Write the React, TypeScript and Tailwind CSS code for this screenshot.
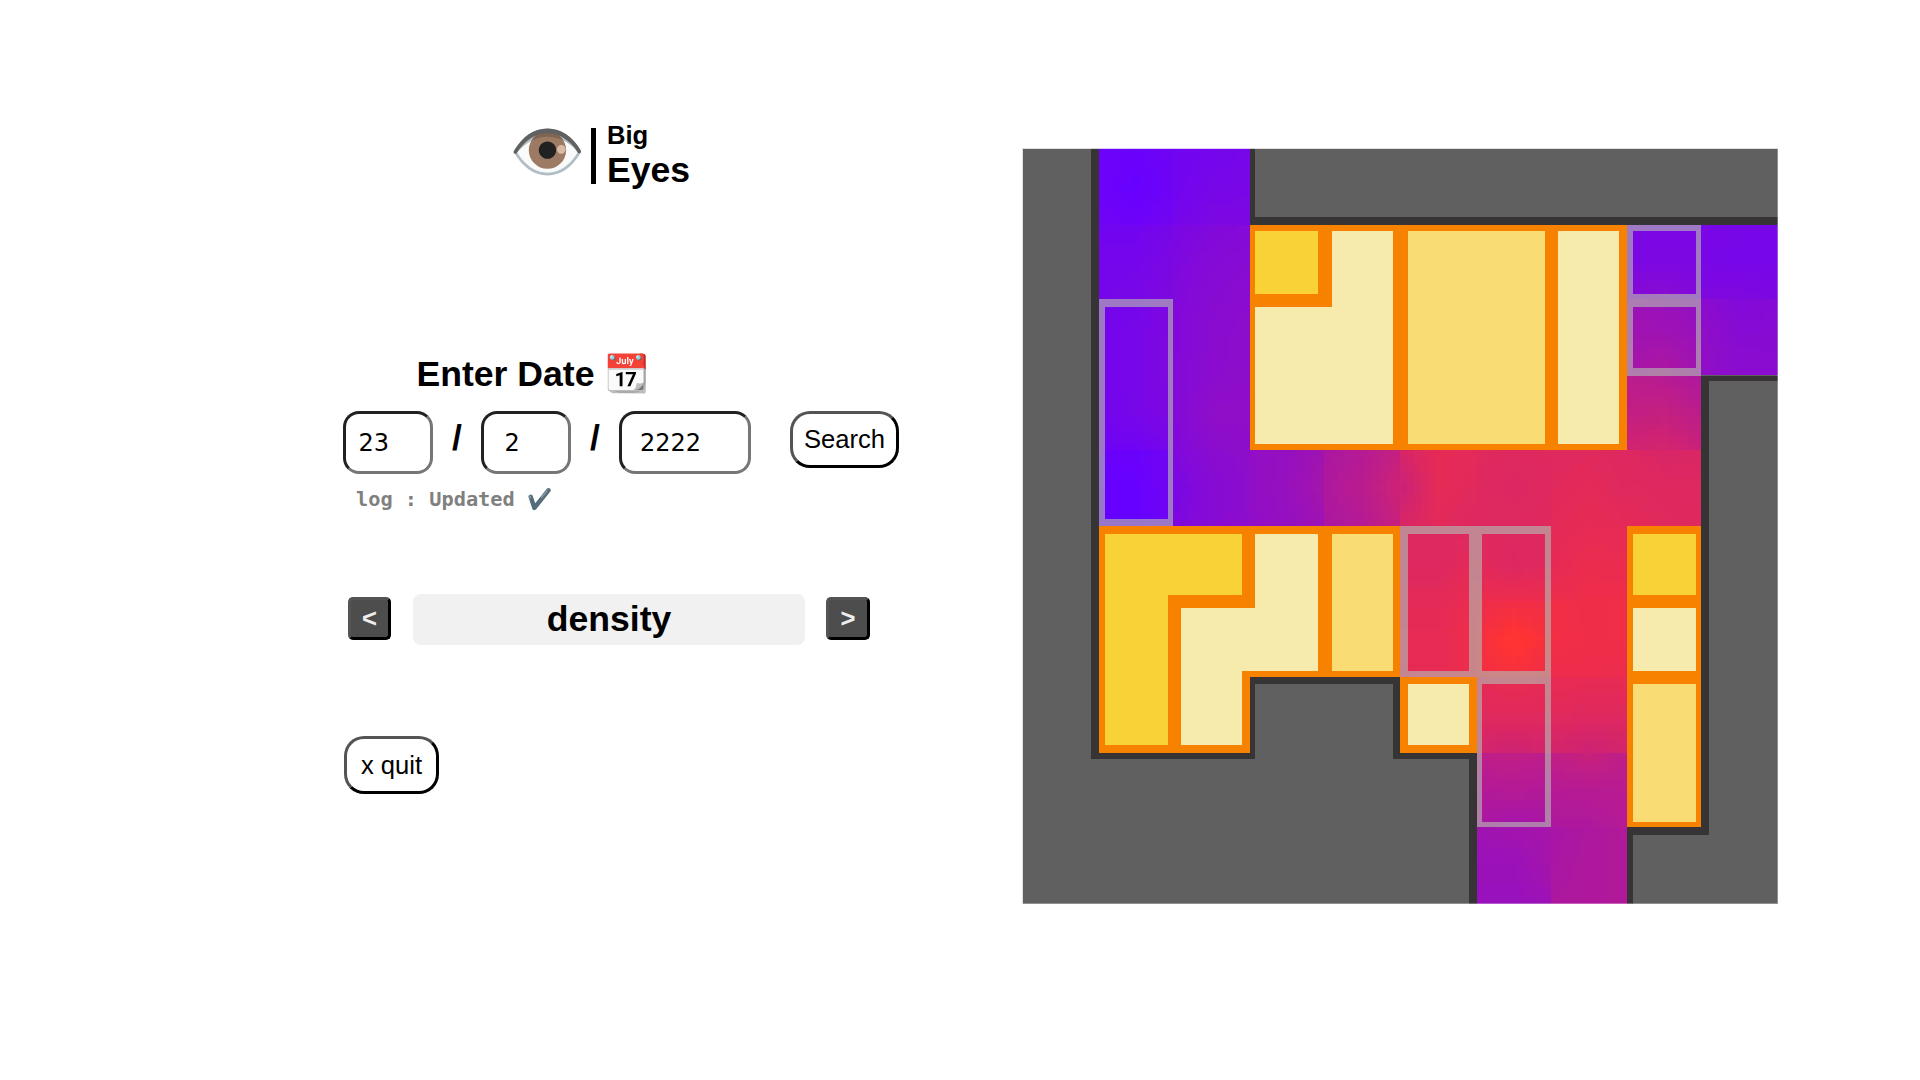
import React from "react";

type Grid = number[][];
type Box = [number, number, number, number];

const COLS = [1022, 1099, 1173, 1250, 1324, 1400, 1477, 1551, 1627, 1701, 1778];
const ROWS = [148, 225, 299, 375, 450, 526, 601, 677, 753, 827, 904];

// Density samples (3x3 per walkable cell), keyed by "column,row".
const DENSITY: Record<string, Grid> = {
  "1,0": [[0.04, 0.02, 0.06], [0.04, 0, 0.05], [0.06, 0.04, 0.08]],
  "1,1": [[0.07, 0.07, 0.11], [0.1, 0.1, 0.14], [0.1, 0.12, 0.16]],
  "1,2": [[0.1, 0.1, 0.14], [0.1, 0.11, 0.16], [0.1, 0.11, 0.16]],
  "1,3": [[0.1, 0.11, 0.16], [0.09, 0.11, 0.15], [0.06, 0.06, 0.11]],
  "1,4": [[0.03, 0.02, 0.08], [0, 0, 0.08], [0, 0, 0.06]],
  "2,0": [[0.07, 0.09, 0.11], [0.07, 0.11, 0.12], [0.1, 0.14, 0.14]],
  "2,1": [[0.12, 0.17, 0.19], [0.15, 0.2, 0.22], [0.17, 0.22, 0.24]],
  "2,2": [[0.17, 0.22, 0.24], [0.18, 0.23, 0.26], [0.18, 0.24, 0.26]],
  "2,3": [[0.18, 0.24, 0.26], [0.18, 0.27, 0.27], [0.17, 0.24, 0.26]],
  "2,4": [[0.17, 0.23, 0.26], [0.12, 0.21, 0.25], [0.15, 0.21, 0.26]],
  "3,4": [[0.28, 0.31, 0.38], [0.28, 0.32, 0.42], [0.27, 0.31, 0.36]],
  "4,4": [[0.45, 0.52, 0.62], [0.47, 0.55, 0.68], [0.45, 0.52, 0.64]],
  "5,4": [[0.74, 0.83, 0.82], [0.64, 0.83, 0.8], [0.75, 0.81, 0.78]],
  "6,4": [[0.81, 0.78, 0.8], [0.78, 0.77, 0.78], [0.79, 0.78, 0.8]],
  "7,4": [[0.8, 0.8, 0.78], [0.8, 0.82, 0.79], [0.82, 0.84, 0.82]],
  "8,4": [[0.78, 0.74, 0.76], [0.8, 0.79, 0.78], [0.82, 0.8, 0.79]],
  "8,1": [[0.13, 0.12, 0.12], [0.14, 0.14, 0.14], [0.2, 0.24, 0.17]],
  "8,2": [[0.36, 0.33, 0.28], [0.38, 0.38, 0.34], [0.42, 0.48, 0.38]],
  "8,3": [[0.56, 0.52, 0.47], [0.6, 0.62, 0.56], [0.7, 0.72, 0.65]],
  "9,1": [[0.13, 0.11, 0.11], [0.12, 0.11, 0.11], [0.16, 0.16, 0.14]],
  "9,2": [[0.24, 0.18, 0.2], [0.28, 0.22, 0.22], [0.28, 0.24, 0.23]],
  "5,5": [[0.78, 0.78, 0.8], [0.78, 0.78, 0.82], [0.82, 0.82, 0.87]],
  "5,6": [[0.82, 0.82, 0.88], [0.84, 0.84, 0.9], [0.83, 0.84, 0.89]],
  "6,5": [[0.8, 0.78, 0.8], [0.81, 0.77, 0.8], [0.87, 0.88, 0.88]],
  "6,6": [[0.88, 0.9, 0.9], [0.92, 1.03, 0.93], [0.92, 0.94, 0.9]],
  "6,7": [[0.83, 0.86, 0.83], [0.8, 0.8, 0.8], [0.71, 0.68, 0.72]],
  "6,8": [[0.58, 0.6, 0.57], [0.5, 0.52, 0.5], [0.45, 0.4, 0.44]],
  "6,9": [[0.38, 0.4, 0.42], [0.34, 0.34, 0.41], [0.33, 0.33, 0.36]],
  "7,5": [[0.82, 0.84, 0.83], [0.83, 0.87, 0.86], [0.88, 0.89, 0.89]],
  "7,6": [[0.91, 0.89, 0.9], [0.92, 0.89, 0.9], [0.87, 0.88, 0.87]],
  "7,7": [[0.86, 0.84, 0.84], [0.8, 0.79, 0.79], [0.72, 0.67, 0.71]],
  "7,8": [[0.59, 0.65, 0.58], [0.52, 0.53, 0.54], [0.47, 0.48, 0.52]],
  "7,9": [[0.43, 0.47, 0.5], [0.44, 0.48, 0.49], [0.47, 0.48, 0.49]],
};

const STEPS = 11;

function sample(g: Grid, u: number, v: number): number {
  const x = u * 2;
  const y = v * 2;
  const i = Math.min(1, Math.floor(x));
  const j = Math.min(1, Math.floor(y));
  const fx = x - i;
  const fy = y - j;
  const top = g[j][i] * (1 - fx) + g[j][i + 1] * fx;
  const bottom = g[j + 1][i] * (1 - fx) + g[j + 1][i + 1] * fx;
  return Math.min(1, top * (1 - fy) + bottom * fy);
}

function heat(t: number): string {
  const q = Math.round(t * 100) / 100;
  return `rgb(${Math.round(102 + 153 * q)},${Math.round(51 * q)},${Math.round(255 - 204 * q)})`;
}

function HeatCell({ id, grid }: { id: string; grid: Grid }) {
  const [c, r] = id.split(",").map(Number);
  const x0 = COLS[c];
  const y0 = ROWS[r];
  const w = COLS[c + 1] - x0;
  const h = ROWS[r + 1] - y0;
  const out: React.ReactElement[] = [];
  for (let j = 0; j < STEPS; j++) {
    for (let i = 0; i < STEPS; i++) {
      const xa = Math.round(x0 + (w * i) / STEPS);
      const xb = Math.round(x0 + (w * (i + 1)) / STEPS);
      const ya = Math.round(y0 + (h * j) / STEPS);
      const yb = Math.round(y0 + (h * (j + 1)) / STEPS);
      out.push(
        <rect
          key={`${i}-${j}`}
          x={xa}
          y={ya}
          width={xb - xa}
          height={yb - ya}
          fill={heat(sample(grid, (i + 0.5) / STEPS, (j + 0.5) / STEPS))}
        />
      );
    }
  }
  return <g>{out}</g>;
}

// Boxes are [left, top, right, bottom].
function rects(boxes: Box[], fill: string) {
  return boxes.map(([a, b, c, d]) => (
    <rect key={`${a}-${b}`} x={a} y={b} width={c - a} height={d - b} fill={fill} />
  ));
}

const WALLS: Box[] = [
  [1091, 148, 1255, 759],
  [1250, 148, 1778, 225],
  [1250, 671, 1408, 759],
  [1393, 670, 1482, 759],
  [1469, 740, 1633, 904],
  [1620, 376, 1709, 835],
  [1690, 376, 1778, 381],
];
const ROCK: Box[] = [
  [1255, 148, 1778, 217],
  [1255, 684, 1393, 759],
  [1709, 381, 1778, 835],
  [1633, 835, 1778, 904],
];
const SHOPS: Box[] = [
  [1250, 225, 1627, 450],
  [1099, 526, 1250, 753],
  [1250, 526, 1400, 677],
  [1400, 677, 1477, 753],
  [1627, 526, 1701, 827],
];
const GOLD: Box[] = [
  [1255, 231, 1318, 294],
  [1105, 534, 1168, 745],
  [1160, 534, 1242, 595],
  [1633, 534, 1696, 595],
];
const CREAM: Box[] = [
  [1332, 231, 1393, 444],
  [1255, 307, 1340, 444],
  [1558, 231, 1619, 444],
  [1255, 534, 1318, 671],
  [1181, 608, 1260, 671],
  [1181, 660, 1242, 745],
  [1408, 684, 1469, 745],
  [1633, 608, 1696, 671],
];
const SAND: Box[] = [
  [1408, 231, 1545, 444],
  [1332, 534, 1393, 671],
  [1633, 684, 1696, 822],
];
const ZONES =
  "M1099 299H1173V526H1099Z M1105 307V519H1168V307Z " +
  "M1627 225H1701V376H1627Z M1633 231V294H1696V231Z M1633 307V368H1696V307Z " +
  "M1400 526H1551V827H1477V677H1400Z M1408 534V671H1469V534Z M1482 534V671H1545V534Z M1482 684V822H1545V684Z";

function DensityMap() {
  return (
    <svg className="block h-[756px] w-[756px] shrink-0" viewBox="1022 148 756 756" shapeRendering="crispEdges">
      <rect x={1022} y={148} width={756} height={756} fill="#606060" />
      {rects(WALLS, "#363434")}
      {rects(ROCK, "#606060")}
      {Object.entries(DENSITY).map(([id, grid]) => (
        <HeatCell key={id} id={id} grid={grid} />
      ))}
      {rects(SHOPS, "#f78200")}
      {rects(GOLD, "#f9d237")}
      {rects(CREAM, "#f6eaad")}
      {rects(SAND, "#f9dd74")}
      <path d={ZONES} fill="#b4b7af" fillOpacity={0.65} fillRule="evenodd" />
      <g fill="#ffffff">
        <rect x={1022} y={148} width={1} height={756} fillOpacity={0.8} />
        <rect x={1023} y={148} width={755} height={1} fillOpacity={0.8} />
        <rect x={1777} y={149} width={1} height={755} fillOpacity={0.3} />
        <rect x={1023} y={903} width={754} height={1} fillOpacity={0.3} />
      </g>
    </svg>
  );
}

const field =
  "h-[63px] rounded-[16px] border-[3px] border-[#767676] [border-style:inset] bg-white font-['DejaVu_Sans',sans-serif] text-[24px] text-black outline-none";
const pill =
  "border-[3px] border-black [border-style:outset] rounded-[20px] bg-white text-[25.6px] leading-none text-black";
const arrow =
  "h-[43px] rounded-[5px] border-[3px] border-black [border-style:outset] bg-[#4d4d4d] text-[25.6px] font-bold leading-none text-[#eeeeee]";

export default function App() {
  return (
    <div className="flex h-[1080px] w-[1920px] overflow-hidden bg-white font-['Liberation_Sans',Arial,sans-serif] text-black">
      <div className="flex w-[1022px] shrink-0 flex-col items-start pl-[343px]">
        <header className="mt-[120px] ml-[166px] flex h-[70px] items-start">
          <span className="w-[82px] text-[61.5px] leading-[64px]">👁️</span>
          <span className="mt-[8px] h-[56px] w-[5px] bg-black" />
          <div className="ml-[11px] flex flex-col font-bold">
            <span className="text-[25.6px] leading-[30px]">Big</span>
            <span className="text-[35.6px] leading-[41px]">Eyes</span>
          </div>
        </header>

        <h1 className="mt-[163px] ml-[73.5px] h-[41px] whitespace-nowrap text-[35.6px] font-bold leading-[41px]">
          Enter Date <span className="text-[36.4px]">📆</span>
        </h1>
        <div className="mt-[17px] flex items-start">
          <input className={`${field} w-[90px] pl-[12.5px]`} defaultValue="23" />
          <span className="w-[48px] pt-[7px] text-center text-[35.6px] font-bold leading-[41px]">/</span>
          <input className={`${field} w-[90px] pl-[20.5px]`} defaultValue="2" />
          <span className="w-[48px] pt-[7px] text-center text-[35.6px] font-bold leading-[41px]">/</span>
          <input className={`${field} w-[132px] pl-[18px]`} defaultValue="2222" />
          <button className={`${pill} ml-[39px] h-[57px] w-[109px]`}>Search</button>
        </div>
        <p className="mt-[12px] ml-[13px] h-[26px] whitespace-pre font-['DejaVu_Sans_Mono',monospace] text-[20.3px] font-bold leading-[26px] text-[#808080]">
          log : Updated ✔️
        </p>

        <div className="mt-[82px] ml-[5px] flex items-start">
          <button className={`${arrow} mt-[3px] w-[43px]`}>&lt;</button>
          <div className="ml-[22px] h-[51px] w-[392px] rounded-[8px] bg-[#f1f1f1] text-center text-[35.6px] font-bold leading-[51px]">
            density
          </div>
          <button className={`${arrow} ml-[21px] mt-[3px] w-[44px]`}>&gt;</button>
        </div>

        <button className={`${pill} mt-[91px] ml-[1px] h-[58px] w-[95px] pt-[2px]`}>x quit</button>
      </div>

      <main className="pt-[148px]">
        <DensityMap />
      </main>
    </div>
  );
}
